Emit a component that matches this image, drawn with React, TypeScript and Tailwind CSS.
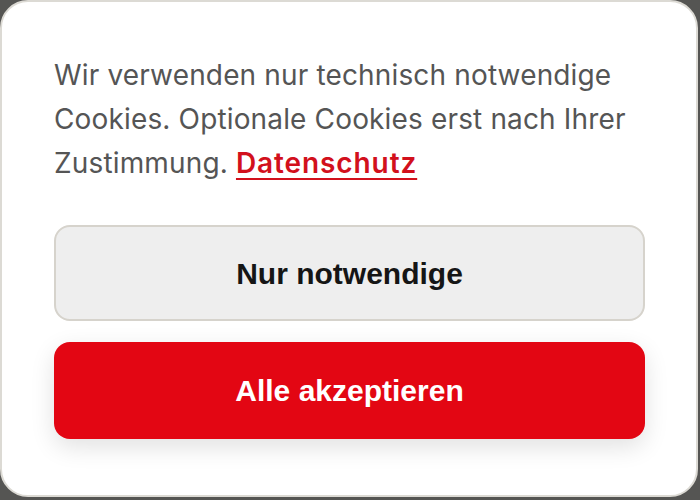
const CookieBanner = () => {
  return (
    <div className="w-[700px] h-[500px] bg-[#555553] overflow-hidden">
      <div className="w-[698px] h-[497px] bg-white rounded-[28px] border-2 border-[#dcdad4] pl-[52px] pr-[51px] pt-[51px]">
        <p
          className="text-[28px] leading-[44px] text-[#555555] tracking-[0.15px]"
          style={{ fontFamily: "Inter, 'Noto Sans', sans-serif" }}
        >
          Wir verwenden nur technisch notwendige
          <br />
          Cookies. Optionale Cookies erst nach Ihrer
          <br />
          Zustimmung.{" "}
          <a
            href="#"
            className="font-semibold tracking-[0.9px] text-[#d2101c] underline underline-offset-[5px] decoration-2"
          >
            Datenschutz
          </a>
        </p>
        <div
          className="mt-[40px] flex flex-col gap-[21px]"
          style={{ fontFamily: "'Liberation Sans', Arial, sans-serif" }}
        >
          <button className="h-[96px] w-full rounded-[16px] border-2 border-[#d6d3cc] bg-[#eeeeee] text-[30px] font-bold text-[#151515]">
            Nur notwendige
          </button>
          <button className="h-[97px] w-full rounded-[16px] bg-[#e30613] text-[30px] font-bold text-white shadow-[0_8px_24px_rgba(0,0,0,0.12)]">
            Alle akzeptieren
          </button>
        </div>
      </div>
    </div>
  );
};

export default function App() {
  return <CookieBanner />;
}
